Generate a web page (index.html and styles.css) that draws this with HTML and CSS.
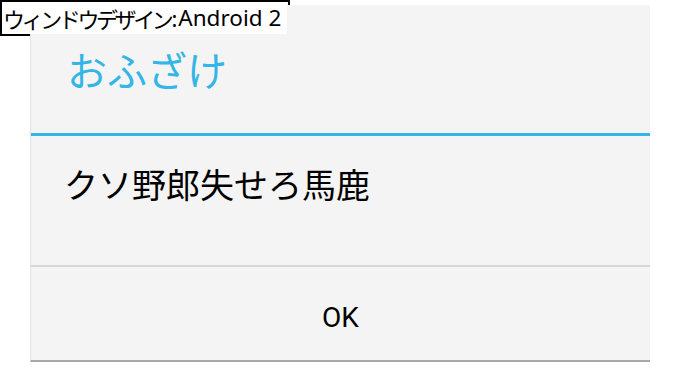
FILE: index.html
```html
<!DOCTYPE html>
<html lang="ja">
<head>
<meta charset="utf-8">
<title>ウィンドウデザイン:Android 2</title>
<link rel="stylesheet" href="styles.css">
</head>
<body>
<div class="label-frame"></div>
<div class="label-text"><span class="label-ja">ウィンドウデザイン</span><span class="label-colon">:</span><span class="label-en">Android 2</span></div>
<div class="stage">
  <div class="dialog">
    <div class="dialog-title">おふざけ</div>
    <div class="dialog-divider"></div>
    <div class="dialog-body">クソ野郎失せろ馬鹿</div>
    <div class="dialog-sep"></div>
    <div class="dialog-buttons"><span class="btn">OK</span></div>
  </div>
</div>
</body>
</html>
```
FILE: styles.css
```css
html, body {
  margin: 0;
  padding: 0;
  background: #ffffff;
}
body {
  width: 680px;
  height: 368px;
  position: relative;
  overflow: hidden;
  font-family: "Noto Sans CJK JP", "Noto Sans", sans-serif;
}
.label-frame {
  position: absolute;
  left: 0;
  top: 0;
  width: 286px;
  height: 32px;
  border: 2px solid #000;
  z-index: 1;
}
.label-text {
  position: absolute;
  left: 2px;
  top: 2px;
  width: 285px;
  height: 32px;
  background: #fff;
  z-index: 3;
  color: #000;
  white-space: nowrap;
  padding-left: 1px;
  box-sizing: border-box;
  display: flex;
  align-items: center;
  overflow: hidden;
}
.label-ja {
  font-family: "Noto Sans CJK JP", sans-serif;
  font-size: 22px;
  letter-spacing: -3.4px;
  line-height: 1;
}
.label-colon {
  font-family: "Noto Sans", sans-serif;
  font-size: 22px;
  line-height: 1;
  margin: 0 1px 0 1px;
}
.label-en {
  font-family: "Noto Sans", "Open Sans", sans-serif;
  font-size: 22.5px;
  line-height: 1;
}
.stage {
  padding: 5px 30px 0 30px;
  position: relative;
  z-index: 2;
}
.dialog {
  width: 620px;
  height: 357px;
  box-sizing: border-box;
  background: #f4f4f4;
  border-left: 1px solid #e2e2e2;
  border-bottom: 2px solid #a8a8a8;
  display: flex;
  flex-direction: column;
}
.dialog-title {
  height: 128px;
  display: flex;
  align-items: center;
  padding-left: 36px;
  font-size: 40px;
  color: #33b5e5;
  line-height: 1;
}
.dialog-divider {
  height: 3px;
  background: #33b5e5;
}
.dialog-body {
  height: 129px;
  box-sizing: border-box;
  padding-top: 31px;
  padding-left: 33px;
  font-size: 34px;
  line-height: 34px;
  color: #000;
}
.dialog-sep {
  height: 2px;
  background: #d6d6d6;
}
.dialog-buttons {
  flex: 1;
  display: flex;
  align-items: center;
  justify-content: center;
}
.btn {
  font-family: Roboto, "Noto Sans", sans-serif;
  font-size: 28px;
  color: #000;
  line-height: 1;
  padding-top: 8px;
}
```
